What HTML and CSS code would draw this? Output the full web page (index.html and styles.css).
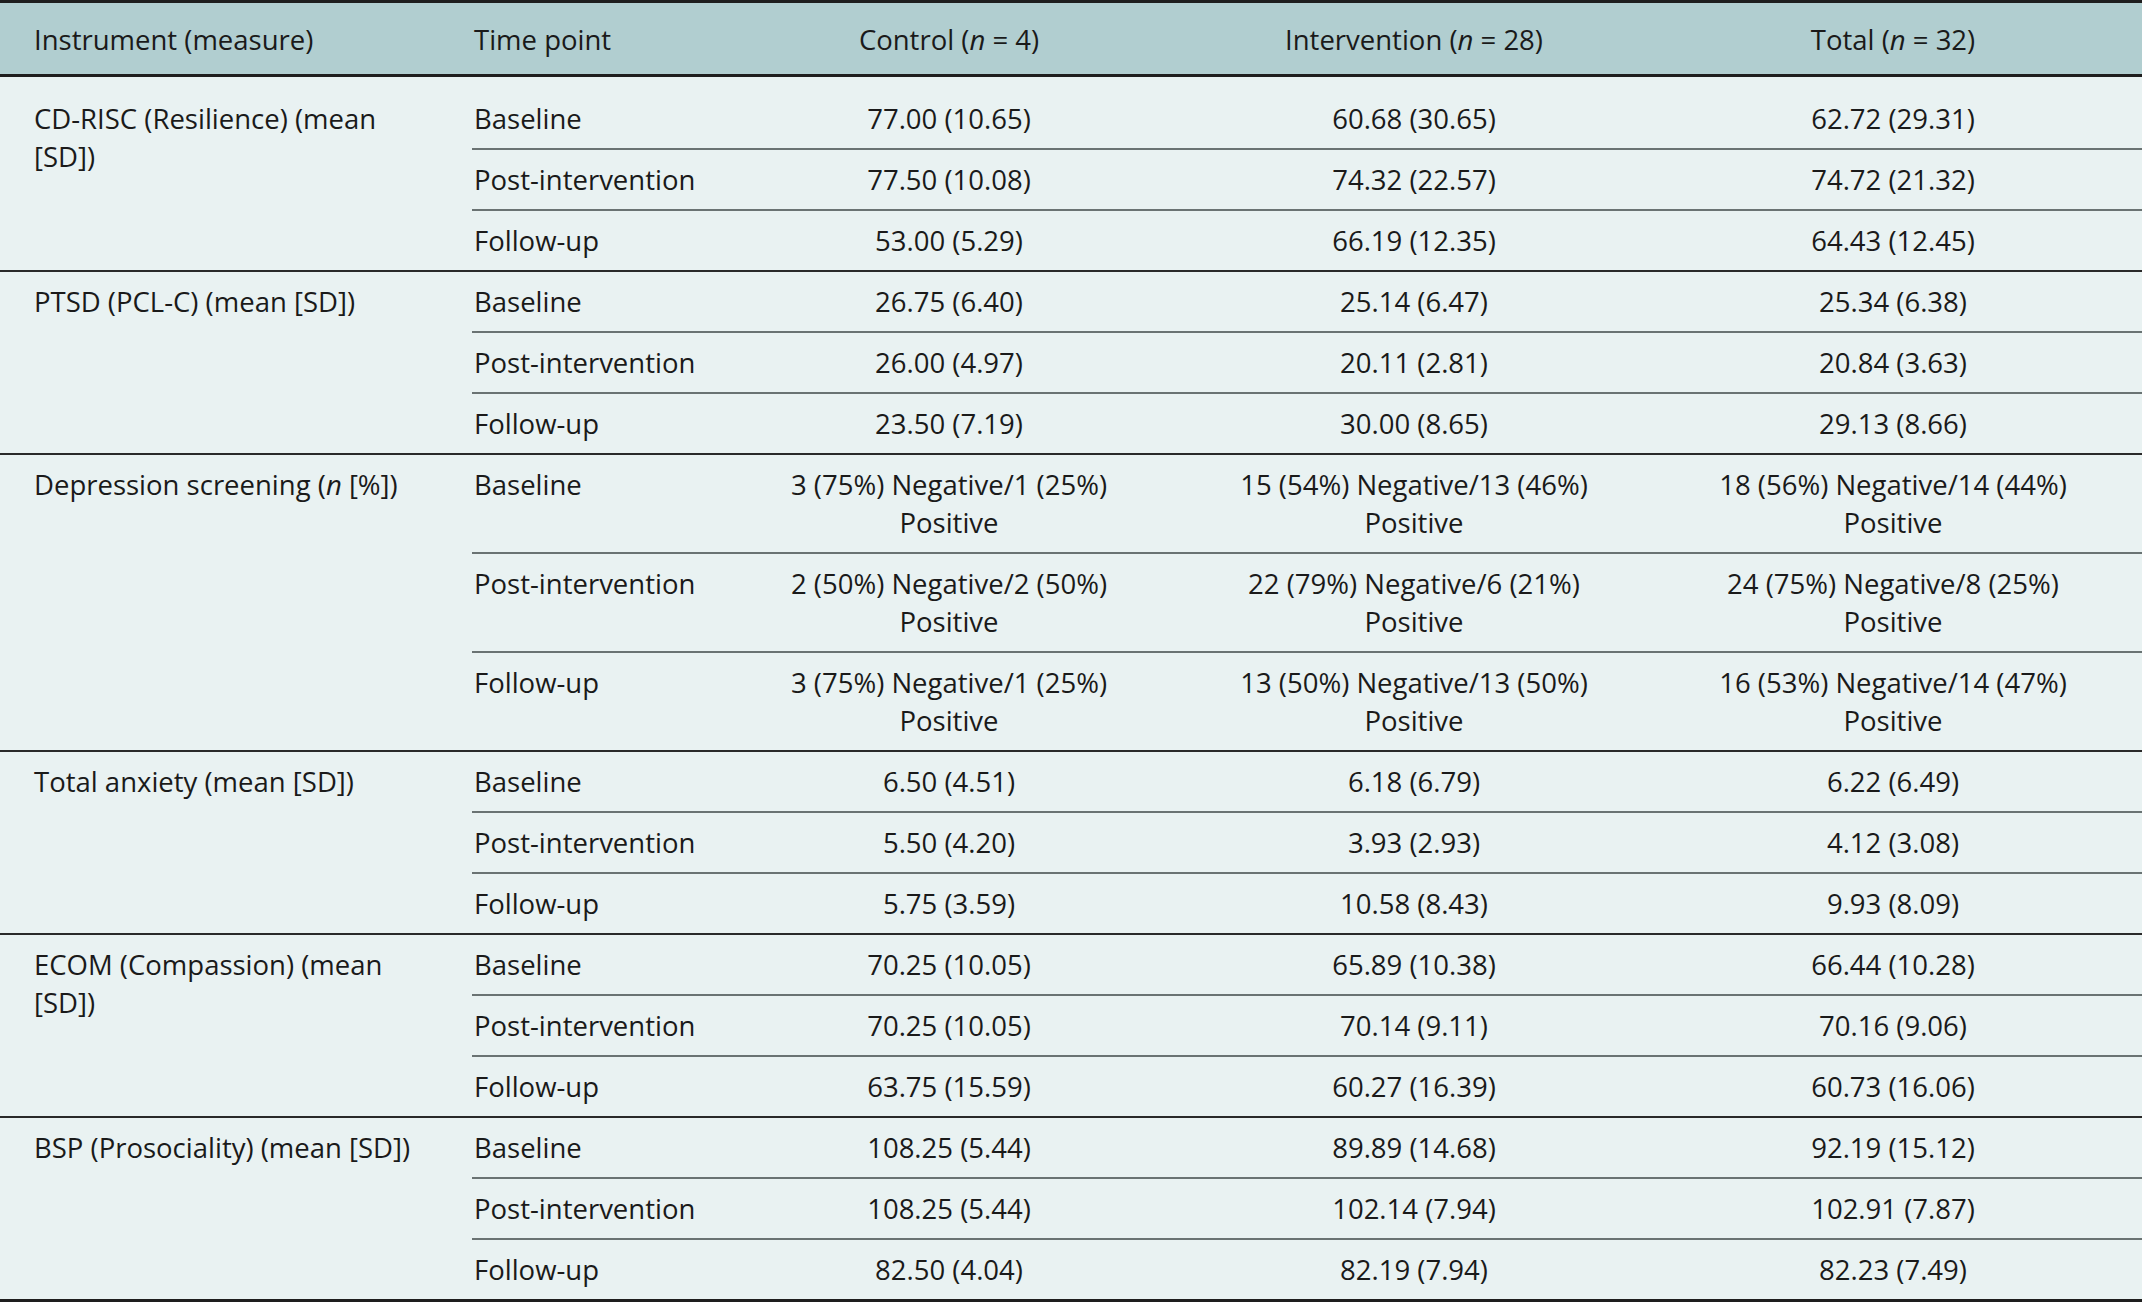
FILE: index.html
```html
<!DOCTYPE html>
<html lang="en">
<head>
<meta charset="utf-8">
<title>Outcome measures by group</title>
<link rel="stylesheet" href="styles.css">
</head>
<body>
<table class="data">
  <colgroup>
    <col class="c-inst">
    <col class="c-time">
    <col class="c-ctrl">
    <col class="c-int">
    <col class="c-tot">
  </colgroup>
  <thead>
    <tr>
      <th class="inst">Instrument (measure)</th>
      <th class="time">Time point</th>
      <th class="num">Control (<i>n</i> = 4)</th>
      <th class="num">Intervention (<i>n</i> = 28)</th>
      <th class="num">Total (<i>n</i> = 32)</th>
    </tr>
  </thead>
  <tbody class="grp first">
    <tr>
      <td class="inst" rowspan="3">CD-RISC (Resilience) (mean<br>[SD])</td>
      <td class="time">Baseline</td><td class="num">77.00 (10.65)</td><td class="num">60.68 (30.65)</td><td class="num">62.72 (29.31)</td>
    </tr>
    <tr><td class="time">Post-intervention</td><td class="num">77.50 (10.08)</td><td class="num">74.32 (22.57)</td><td class="num">74.72 (21.32)</td></tr>
    <tr class="last"><td class="time">Follow-up</td><td class="num">53.00 (5.29)</td><td class="num">66.19 (12.35)</td><td class="num">64.43 (12.45)</td></tr>
  </tbody>
  <tbody class="grp">
    <tr>
      <td class="inst" rowspan="3">PTSD (PCL-C) (mean [SD])</td>
      <td class="time">Baseline</td><td class="num">26.75 (6.40)</td><td class="num">25.14 (6.47)</td><td class="num">25.34 (6.38)</td>
    </tr>
    <tr><td class="time">Post-intervention</td><td class="num">26.00 (4.97)</td><td class="num">20.11 (2.81)</td><td class="num">20.84 (3.63)</td></tr>
    <tr class="last"><td class="time">Follow-up</td><td class="num">23.50 (7.19)</td><td class="num">30.00 (8.65)</td><td class="num">29.13 (8.66)</td></tr>
  </tbody>
  <tbody class="grp">
    <tr>
      <td class="inst" rowspan="3">Depression screening (<i>n</i> [%])</td>
      <td class="time">Baseline</td><td class="num">3 (75%) Negative/1 (25%)<br>Positive</td><td class="num">15 (54%) Negative/13 (46%)<br>Positive</td><td class="num">18 (56%) Negative/14 (44%)<br>Positive</td>
    </tr>
    <tr><td class="time">Post-intervention</td><td class="num">2 (50%) Negative/2 (50%)<br>Positive</td><td class="num">22 (79%) Negative/6 (21%)<br>Positive</td><td class="num">24 (75%) Negative/8 (25%)<br>Positive</td></tr>
    <tr class="last"><td class="time">Follow-up</td><td class="num">3 (75%) Negative/1 (25%)<br>Positive</td><td class="num">13 (50%) Negative/13 (50%)<br>Positive</td><td class="num">16 (53%) Negative/14 (47%)<br>Positive</td></tr>
  </tbody>
  <tbody class="grp">
    <tr>
      <td class="inst" rowspan="3">Total anxiety (mean [SD])</td>
      <td class="time">Baseline</td><td class="num">6.50 (4.51)</td><td class="num">6.18 (6.79)</td><td class="num">6.22 (6.49)</td>
    </tr>
    <tr><td class="time">Post-intervention</td><td class="num">5.50 (4.20)</td><td class="num">3.93 (2.93)</td><td class="num">4.12 (3.08)</td></tr>
    <tr class="last"><td class="time">Follow-up</td><td class="num">5.75 (3.59)</td><td class="num">10.58 (8.43)</td><td class="num">9.93 (8.09)</td></tr>
  </tbody>
  <tbody class="grp">
    <tr>
      <td class="inst" rowspan="3">ECOM (Compassion) (mean<br>[SD])</td>
      <td class="time">Baseline</td><td class="num">70.25 (10.05)</td><td class="num">65.89 (10.38)</td><td class="num">66.44 (10.28)</td>
    </tr>
    <tr><td class="time">Post-intervention</td><td class="num">70.25 (10.05)</td><td class="num">70.14 (9.11)</td><td class="num">70.16 (9.06)</td></tr>
    <tr class="last"><td class="time">Follow-up</td><td class="num">63.75 (15.59)</td><td class="num">60.27 (16.39)</td><td class="num">60.73 (16.06)</td></tr>
  </tbody>
  <tbody class="grp end">
    <tr>
      <td class="inst" rowspan="3">BSP (Prosociality) (mean [SD])</td>
      <td class="time">Baseline</td><td class="num">108.25 (5.44)</td><td class="num">89.89 (14.68)</td><td class="num">92.19 (15.12)</td>
    </tr>
    <tr><td class="time">Post-intervention</td><td class="num">108.25 (5.44)</td><td class="num">102.14 (7.94)</td><td class="num">102.91 (7.87)</td></tr>
    <tr class="last"><td class="time">Follow-up</td><td class="num">82.50 (4.04)</td><td class="num">82.19 (7.94)</td><td class="num">82.23 (7.49)</td></tr>
  </tbody>
</table>
</body>
</html>
```

FILE: styles.css
```css
html, body {
  margin: 0;
  padding: 0;
  background: #ffffff;
}

body {
  width: 2142px;
  height: 1303px;
  overflow: hidden;
  font-family: "Open Sans", "Noto Sans", "Liberation Sans", sans-serif;
  font-size: 27.5px;
  color: #1a1a1a;
}

.data {
  width: 2142px;
  border-collapse: collapse;
  table-layout: fixed;
  background: #e9f2f2;
  line-height: 38px;
}

.c-inst { width: 472px; }
.c-time { width: 242px; }
.c-ctrl { width: 470px; }
.c-int { width: 460px; }
.c-tot { width: 498px; }

.data th,
.data td {
  padding: 0;
  font-weight: 400;
  vertical-align: top;
}

.data thead th {
  background: #b1ced0;
  height: 68px;
  vertical-align: middle;
  border-top: 3px solid #1e1e1e;
  border-bottom: 3px solid #1e1e1e;
  padding: 3px 0 0;
}

.data th.inst,
.data td.inst {
  text-align: left;
  padding-left: 34px;
  padding-right: 20px;
  white-space: nowrap;
}

.data .time {
  text-align: left;
  padding-left: 2px;
}

.data .num {
  text-align: center;
}

.data tbody td.time,
.data tbody td.num {
  padding-top: 11px;
  padding-bottom: 10px;
  border-bottom: 2px solid #6a7373;
}

.data tbody td.inst {
  padding-top: 11px;
}

.data tbody.first tr:first-child td {
  padding-top: 23px;
}

.data tbody tr.last td {
  border-bottom: 2px solid #2a2a2a;
}

.data tbody .inst {
  border-bottom: 2px solid #2a2a2a;
}

.data tbody.end tr.last td,
.data tbody.end .inst {
  border-bottom: 3px solid #1e1e1e;
}

.data i {
  font-style: italic;
}
```
